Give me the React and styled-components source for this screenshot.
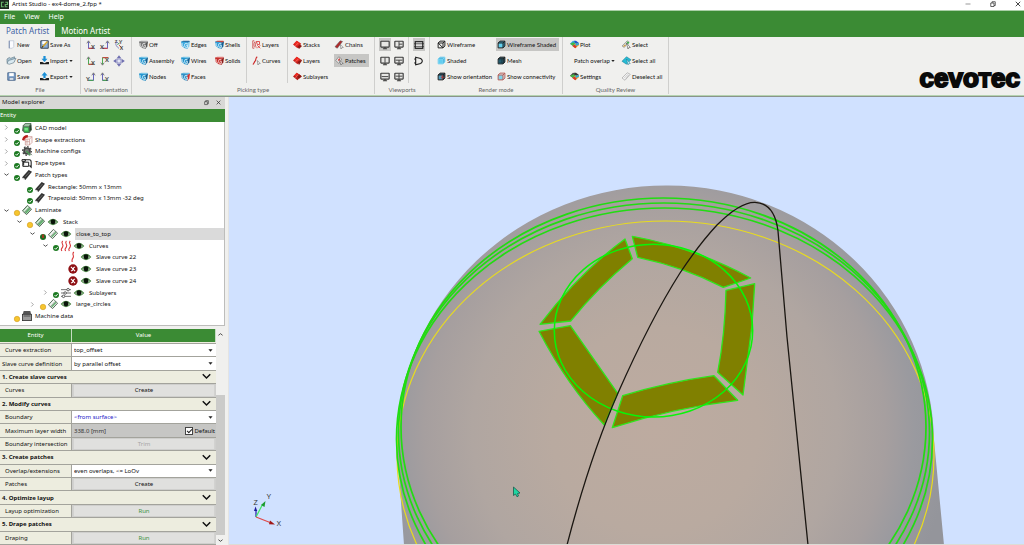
import React from "react";
import styled, { createGlobalStyle, css } from "styled-components";

const green = "#3b8b34";
const uiFont = '"Noto Sans", "Open Sans", sans-serif';

const GlobalStyle = createGlobalStyle`
  *, *::before, *::after { box-sizing: border-box; }
  html, body { margin: 0; height: 100%; overflow: hidden; }
  body { font-family: ${uiFont}; font-size: 6px; line-height: 10px; color: #111; background: #f0f0ee; }
  button, select, input { font: inherit; color: inherit; margin: 0; padding: 0; border: 0; background: none; border-radius: 0; }
`;

/* ---------- icons ---------- */

const Svg = styled.svg`
  display: block;
  flex: none;
  width: ${(p) => p.$w || 10}px;
  height: ${(p) => p.$w || 10}px;
  overflow: visible;
`;

const Cube = ({ a, b, c, mark = "#dff3fb" }) => (
  <>
    <path d="M0 2 3 1h8l1 1-3 2.500z" fill={b} />
    <path d="M0 2l9 1v8.500L5 11 1 8z" fill={a} />
    <path d="M8.500 4 12 2l-1 7-3 2.500z" fill={c} />
    <path d="M8.500 4.500q-4-1-4 2.500t4 3V7H6.500M1.500 4v3l2 2" fill="none" stroke={mark} strokeWidth="1.100" />
  </>
);

const WireCube = ({ fill = "none", stroke = "#222", side = fill }) => (
  <g stroke={stroke} strokeWidth="1.300" strokeLinejoin="round">
    <path d="M1.500 4 4 1.500h6.500V8L8 10.500z" fill={side} />
    <path d="M1.500 4H8v6.500H1.500z" fill={fill} />
    <path d="M8 4l2.500-2.500" fill="none" />
  </g>
);

const Axis = ({ side, flip, down, dx = "X", uc = "#5b59b8" }) => (
  <>
    <path
      d={down ? "M3 2v8M3 2h7" : flip ? "M9 2v8H2" : "M3 2v8h7"}
      fill="none"
      stroke={uc}
      strokeWidth="1.100"
    />
    <path d={down ? "M3 2h7" : flip ? "M9 10H3" : "M3 10h6"} stroke={side} strokeWidth="1.200" />
    <path d={down ? "M1 8l2 3 2-3" : flip ? "M7 4l2-3 2 3" : "M1 4l2-3 2 3"} fill="none" stroke="#555" strokeWidth=".9" />
    <text x={flip ? 0 : 6} y={down ? 7 : 11} fontSize="7" fontWeight="700" fill="#444">{dx}</text>
  </>
);

const Monitor = ({ lines }) => (
  <>
    <rect x="1" y="1.500" width="10" height="7" rx=".6" fill="#e6e6e4" stroke="#3c3c3c" strokeWidth="1.400" />
    <path d="M3.500 10.500h5M6 8.500v2" stroke="#3c3c3c" strokeWidth="1.300" />
    {lines && <path d={lines} stroke="#3c3c3c" strokeWidth="1.100" fill="none" />}
  </>
);

const Diamond = ({ fill = "#d8201c", second }) => (
  <>
    <path d="M0 6 5 1l6 4-5 6z" fill={fill} />
    <path d="M1.500 4.500 5 1l4 3-3.500 3.500z" fill="#ee2b22" />
    <path d={second || "M6 9l3-3 3 2-4 4z"} fill="#8d1713" />
    <path d="M3 8l4-4" stroke="#f7a8a4" strokeWidth=".6" />
  </>
);

const Plate = ({ fill = "#a9d8b0", stroke = "#5b6b5e" }) => (
  <>
    <path d="M.5 7 6.500.500 11.500 5 5.500 11.500z" fill={fill} stroke={stroke} strokeWidth="1.200" strokeLinejoin="round" />
    <path d="M2.500 7.500 7.500 2" stroke="#f4f8f4" strokeWidth="1.100" />
    <path d="M4.500 9.500 9.500 4" stroke="#55a862" strokeWidth="1.600" />
    <path d="M3.500 8.500 8.500 3" stroke={stroke} strokeWidth=".7" />
  </>
);

const Rainbow = ({ dark }) => (
  <>
    <path d="M0 5 4 1l4 2-4 5z" fill={dark ? "#444" : "#2aa7e0"} />
    <path d="M5 1h3l4 3-4 2z" fill={dark ? "#333" : "#1b57c8"} />
    <path d="M0 5l4 3 3-3-2-2z" fill="#45b944" />
    <path d="M4 8l3-3 5-1v3L7 11z" fill="#e7a52c" />
    <path d="M3 8l4 3 2-2-3-3z" fill="#d8382a" />
    <path d="M7 5l5-1v2L8 8z" fill="#2aa7e0" />
  </>
);

const art = {
  app: (
    <>
      <rect width="12" height="12" fill="#1d2a20" />
      <path d="M5 3H2v6h3M7 3h3v3H7v3h3" fill="none" stroke="#69b56c" strokeWidth="1.500" />
    </>
  ),
  new: (
    <>
      <path d="M3 1h6v8l-2 2H3z" fill="#fbfcff" stroke="#b4bfd2" strokeWidth=".9" />
      <path d="M3 1v10" stroke="#6f83a8" strokeWidth="1.200" />
    </>
  ),
  open: (
    <>
      <path d="M0 9V4l3-2 2 1 5-2v6z" fill="#a9c3d2" stroke="#5d7482" strokeWidth=".8" />
      <path d="M0 10l2-4 10-3-3 6-6 2z" fill="#d9e9f1" stroke="#5d7482" strokeWidth=".8" />
    </>
  ),
  save: (
    <>
      <path d="M1 1h10v10H1z" fill="#7fa3cf" stroke="#39557d" />
      <path d="M3 1.500h6v4H3z" fill="#fff" />
      <path d="M3 7.500h6V11H3z" fill="#dfe6ee" stroke="#39557d" strokeWidth=".6" />
    </>
  ),
  saveAs: (
    <>
      <path d="M1 1h10v10H1z" fill="#8aaedb" stroke="#303a48" strokeWidth="1.200" />
      <path d="M3 1.500h6v4H3z" fill="#fff" />
      <path d="M3 9.500 10 2" stroke="#d6a72c" strokeWidth="2" />
      <path d="M2.500 10.500 4 8" stroke="#222" strokeWidth="1.200" />
    </>
  ),
  import: (
    <>
      <path d="M0 8h3L6 9.500 9 8h3v3H0z" fill="#1d1d1d" />
      <path d="M4.500 0h3v3.500h2.500L6 8 2 3.500h2.500z" fill="#1b8fd6" />
    </>
  ),
  export: (
    <>
      <path d="M0 8h3L6 9.500 9 8h3v3H0z" fill="#1d1d1d" />
      <path d="M4.500 8h3V4.500h2.500L6 0 2 4.500h2.500z" fill="#1b8fd6" />
    </>
  ),
  ax1: <Axis side="#cf3a3a" />,
  ax2: <Axis flip side="#cf3a3a" />,
  ax3: (
    <>
      <path d="M3 2C1 5 3 8 6 10M3 2l3 3" fill="none" stroke="#6d6bb5" />
      <path d="M6 6l4 4" stroke="#cf3a3a" />
      <path d="M4 6l3-3" stroke="#3fa345" />
      <text x="6" y="5" fontSize="6" fontWeight="700" fill="#444">Y</text>
      <text x="7" y="12" fontSize="6" fontWeight="700" fill="#444">X</text>
      <text x="1" y="4" fontSize="5" fontWeight="700" fill="#444">Z</text>
    </>
  ),
  ax4: <Axis side="#cf3a3a" uc="#3fa345" />,
  ax5: <Axis down side="#cf3a3a" uc="#3fa345" />,
  fit: (
    <>
      <path d="M6-1l2.500 3.500h-5zM6 13l2.500-3.500h-5zM-1 6l3.500-2.500v5zM13 6 9.500 3.500v5z" fill="#6f6fb0" />
      <rect x="3.500" y="3.500" width="5" height="5" fill="#e4e6f6" stroke="#6f6fb0" />
    </>
  ),
  ax6: <Axis flip side="#3fa345" dx="Y" />,
  ax7: <Axis side="#3fa345" dx="Y" />,
  off: <Cube a="#777" b="#aaa" c="#555" mark="#ececec" />,
  blue: <Cube a="#2596cf" b="#7cc7e8" c="#155f92" />,
  edges: <Cube a="#39a7dd" b="#2a6f9f" c="#8bd0ef" />,
  faces: <Cube a="#2f8fc4" b="#6abce2" c="#d22e2a" />,
  shells: <Cube a="#2f9dd6" b="#c9473f" c="#155f92" />,
  solids: <Cube a="#c4302d" b="#e07a76" c="#8a1c1a" mark="#fbd9d7" />,
  pLayers: (
    <>
      <path d="M3 1H1v10h2M4 2c-2 3-2 6 0 8M6 2c-2 3-2 6 0 8" fill="none" stroke="#c93a3a" />
      <path d="M6 2h4v4H7zM7 7l4 4M7 11l4-4" fill="none" stroke="#d33" strokeWidth="1.100" />
    </>
  ),
  pCurves: (
    <>
      <path d="M7 1c-3 2-1 4-3 6S3 11 1 11" fill="none" stroke="#c22" strokeWidth="1.500" />
      <path d="M7 6l4 4-2 .2-1 1.800z" fill="#fff" stroke="#444" strokeWidth=".6" />
    </>
  ),
  stacks: <Diamond />,
  layers: <Diamond fill="#c92420" second="M6 8l5-3 1 1-4 6z" />,
  sublayers: <Diamond fill="#b51d1a" second="M5 6l3-3 4 3-4 3z" />,
  chains: (
    <>
      <path d="M0 9l7-8 3 1-7 9z" fill="#b3282a" stroke="#555" strokeWidth=".7" />
      <path d="M7 6l4 4-2 .2-1 1.800z" fill="#fff" stroke="#444" strokeWidth=".6" />
    </>
  ),
  patches: (
    <>
      <path d="M1 6 5 1l4 3-4 6z" fill="#e4e4e2" stroke="#777" strokeWidth=".9" />
      <path d="M4 5l2-2 1 1-2 3z" fill="#c33" />
      <path d="M6 6l5 4-2 .2-1 1.800z" fill="#fff" stroke="#444" strokeWidth=".7" />
    </>
  ),
  m1: <Monitor />,
  m2: <Monitor lines="M6 2v6M6 5h4" />,
  m3: <Monitor lines="M6 2v6" />,
  m4: <Monitor lines="M2 5h8M6 5v3" />,
  m5: <Monitor lines="M2 5.500h8" />,
  m6: <Monitor lines="M2 5h8M6 2v6" />,
  ortho: (
    <>
      <rect x="1.500" y="2" width="9" height="8" fill="#dedede" stroke="#222" strokeWidth="1.400" />
      <path d="M0 4.500h12M0 8h12" stroke="#222" strokeWidth=".8" />
    </>
  ),
  persp: <path d="M2 1.500 8 3q4 3 0 6L2 10.500zM.5 3.500 2 4M.5 8.500 2 8" fill="none" stroke="#222" strokeWidth="1.400" />,
  wire: <WireCube />,
  shaded: <WireCube fill="#62cdf0" side="#2aa2d4" stroke="#7ed3f0" />,
  orient: (
    <>
      <WireCube fill="#4f9fc0" side="#24566e" />
      <path d="M5 7h5M7 4v6" stroke="#a83b3b" strokeWidth="1.200" />
    </>
  ),
  wireShaded: <WireCube fill="#63d0ee" side="#2d8fb0" />,
  mesh: (
    <>
      <WireCube fill="#3d8ca6" side="#1c4c5e" />
      <path d="M4 4v6M6 4v6M2 6.500h6M2 8.500h6" stroke="#12303a" strokeWidth=".8" />
    </>
  ),
  connect: <WireCube fill="#7fd4ea" side="#d8eef4" stroke="#b85a52" />,
  plot: <Rainbow />,
  settings: <Rainbow dark />,
  select: (
    <>
      <path d="M0 8 7 1l2 1-6 8z" fill="#cfd6c8" stroke="#777" strokeWidth=".7" />
      <path d="M6 2l4 1-2 3z" fill="#3ab54a" />
      <path d="M1 9l3-3 1 2z" fill="#d93" />
      <path d="M6 4l5 6-2 .2-1 1.800z" fill="#fff" stroke="#333" strokeWidth=".7" />
    </>
  ),
  selectAll: (
    <>
      <path d="M0 7 6 1l6 4-6 6z" fill="#25bcd4" stroke="#1b7f9a" strokeWidth=".8" />
      <path d="M6 4l5 6-2 .2-1 1.800z" fill="#b9f3fb" stroke="#1b5f7a" strokeWidth=".6" />
    </>
  ),
  deselect: (
    <>
      <path d="M0 8 7 1l4 2-7 8z" fill="#f3f3f3" stroke="#999" strokeWidth=".8" />
      <path d="M3 8l5-5M5 9l4-5" stroke="#aaa" strokeWidth=".7" />
    </>
  ),
  cad: (
    <>
      <path d="M1 3 4 0h7l1 8-3 4H3L0 9z" fill="#55705a" />
      <path d="M2 5h6v6H3z" fill="#35b84b" />
      <path d="M4 1h6L8 4H2z" fill="#9fbfa4" />
      <path d="M9 4l2-2v6l-2 2z" fill="#2c4431" />
      <path d="M3 6h4v3H3z" fill="#7be08b" />
    </>
  ),
  shape: (
    <>
      <path d="M4 2h8v7l-3 3H4z" fill="#fbf5f4" stroke="#c58b88" strokeWidth=".8" />
      <path d="M4 5h5v7M9 5l3-3M6 5v6M4 8h5" fill="none" stroke="#c58b88" strokeWidth=".7" />
      <path d="M0 6Q1 0 7 0v3Q3 3 3 7z" fill="#b81c1c" />
    </>
  ),
  gear: (
    <>
      <circle cx="6" cy="6" r="3.600" fill="#777" stroke="#444" strokeWidth="2" />
      <circle cx="6" cy="6" r="5.200" fill="none" stroke="#444" strokeWidth="1.500" strokeDasharray="2 2" />
      <path d="M5 6l5 5" stroke="#4d9b57" strokeWidth="1.800" />
      <path d="M7 5l5 6" stroke="#666" strokeWidth=".9" />
    </>
  ),
  tape: (
    <>
      <path d="M0 2h4v2H0zM2 4v5M1 5h7v5H1z" fill="none" stroke="#222" strokeWidth="1.200" />
      <path d="M3 2h6q2 0 2 3v6l-2-2" fill="none" stroke="#222" strokeWidth="1.300" />
    </>
  ),
  patch: (
    <>
      <path d="M0 9 8 0l4 2-8 10z" fill="#333" />
      <path d="M.5 9.500 3.500 11.500" stroke="#ddd" strokeWidth="1.500" />
      <path d="M4 8l5-5.500" stroke="#888" strokeWidth=".8" />
    </>
  ),
  plate: <Plate />,
  plateLight: <Plate fill="#eef2ee" />,
  curves: (
    <path d="M2 0c-3 3 2 4 0 7s-2 3-1 5M6.500 0c-3 3 2 4 0 7s-2 3-1 5M11 0c-3 3 2 4 0 7s-2 3-1 5" fill="none" stroke="#d9383a" strokeWidth="1.300" />
  ),
  curve: <path d="M7 0c-3 3 1 4-1 7s-1 3-1 5" fill="none" stroke="#d9383a" strokeWidth="1.300" />,
  error: (
    <>
      <circle cx="6" cy="6" r="5.600" fill="#8f1014" />
      <path d="M3.500 8.500Q6 8 6 6t2.500-2.500M3.500 3.500l5 5" fill="none" stroke="#fff" strokeWidth="1.300" />
    </>
  ),
  sliders: (
    <>
      <path d="M0 2h12M0 6h12M0 10h12" stroke="#555" strokeWidth="1" />
      <circle cx="8.500" cy="2" r="1.500" fill="#fff" stroke="#444" />
      <circle cx="5" cy="6" r="1.500" fill="#fff" stroke="#444" />
      <circle cx="3" cy="10" r="1.500" fill="#fff" stroke="#444" />
    </>
  ),
  machine: (
    <>
      <path d="M2 0h8l1 4H1z" fill="#555" />
      <rect x=".5" y="4" width="11" height="7.500" fill="#9b9b9b" stroke="#333" />
      <path d="M2 6h8" stroke="#444" />
    </>
  ),
  eye: (
    <>
      <path d="M.5 6Q6-.5 11.500 6 6 12.500.5 6z" fill="#cdeac9" stroke="#3b7a35" strokeWidth="1.300" />
      <circle cx="6" cy="5.800" r="3" fill="#081408" />
    </>
  ),
  ok: (
    <>
      <circle cx="6" cy="6" r="6" fill="#1d7a22" />
      <path d="M3 6l2.500 2.500L9.500 4" fill="none" stroke="#fff" strokeWidth="1.800" />
    </>
  ),
  warn: <circle cx="6" cy="6" r="5.500" fill="#f6c52e" stroke="#c98f12" />,
  mixed: (
    <>
      <circle cx="6" cy="6" r="6" fill="#1d6a22" />
      <path d="M4 1h4v7H4z" fill="#9a3a1e" />
    </>
  ),
  chevR: <path d="M3 1l5 5-5 5" fill="none" stroke="#8a8a8a" strokeWidth="1.800" />,
  chevD: <path d="M1 4l5 4 5-4" fill="none" stroke="#333" strokeWidth="2" />,
  chevU: <path d="M1 8l5-4 5 4" fill="none" stroke="#333" strokeWidth="2" />,
  fold: <path d="M1 3l5 5 5-5" fill="none" stroke="#111" strokeWidth="2" />,
  caret: <path d="M1 3h10L6 9z" fill="#222" />,
  min: <path d="M1 6h10" stroke="#333" />,
  restore: <path d="M1.500 4h6.500v7H1.500zM4 4V1.500h6.500V9H8" fill="none" stroke="#333" strokeWidth="1.500" />,
  close: <path d="M1.500 1.500l9 9M10.500 1.500l-9 9" stroke="#333" strokeWidth="1.800" />,
};

const Icon = ({ name, w }) => (
  <Svg viewBox="0 0 12 12" $w={w} aria-hidden="true">
    {art[name]}
  </Svg>
);

/* ---------- frame ---------- */

const Window = styled.div`
  display: flex;
  flex-direction: column;
  height: 100vh;
`;

const TitleBar = styled.header`
  display: flex;
  align-items: center;
  height: 11px;
  padding: 0 3px 2px 0;
  gap: 3px;
  background: #fff;
  border-bottom: 1px solid #a9cfa6;
`;

const TitleText = styled.h1`
  flex: 1;
  margin: 0;
  font-size: 6px;
  line-height: 8px;
  font-weight: 400;
`;

const WindowButtons = styled.div`
  display: flex;
  gap: 18px;
`;

const IconButton = styled.button`
  display: grid;
  place-items: center;
  width: ${(p) => p.$size || 7}px;
`;

const MenuBar = styled.nav`
  display: flex;
  gap: 9px;
  height: 13px;
  padding: 0 0 2px 4px;
  align-items: center;
  font-size: 7px;
  color: #fff;
  background: ${green};
`;

const TabBar = styled.div`
  display: flex;
  height: 13px;
  background: ${green};
`;

const Tab = styled.button`
  padding: 0 6px;
  font-size: 8px;
  line-height: 12px;
  color: ${(p) => (p.$active ? "#3d62a5" : "#fff")};
  background: ${(p) => (p.$active ? "#f0f0ee" : "none")};
`;

const Ribbon = styled.div`
  display: flex;
  justify-content: space-between;
  height: 60px;
  border-bottom: 1px solid #8a938a;
  box-shadow: inset 0 -1px 0 #b5d3b0;
  background: #f0f0ee;
  font-family: Lato, sans-serif;
`;

const Groups = styled.div`
  display: flex;
`;

const Group = styled.section`
  display: flex;
  flex-direction: column;
  width: ${(p) => p.$w}px;
  margin: 0 0 2px;
  border-right: 1px solid #cfcfcd;
`;

const GroupBody = styled.div`
  display: flex;
  height: 49px;
  padding-left: ${(p) => p.$pad || 0}px;
`;

const Caption = styled.div`
  line-height: 8px;
  text-align: center;
  color: #666;
`;

const Column = styled.div`
  display: grid;
  grid-template-rows: repeat(3, 16px);
  align-items: start;
  padding-top: 1px;
  height: 46px;
  width: ${(p) => p.$w}px;
  ${(p) => p.$rule && css`
    border-left: 1px solid #cfcfcd;
    padding-left: 4px;
  `}
`;

const Tool = styled.button`
  display: flex;
  align-items: center;
  gap: 1px;
  justify-self: start;
  height: 13px;
  padding: 0 ${(p) => (p.$on ? 3 : 0)}px 0 1px;
  line-height: 9px;
  white-space: nowrap;
  background: ${(p) => (p.$on ? "#c6c6c4" : "none")};
`;

const PressedTool = styled.button`
  display: grid;
  place-items: center;
  height: 13px;
  justify-self: start;
  background: #c6c6c4;
  padding: 0 1px;
`;

const Logo = styled.div`
  align-self: flex-end;
  padding: 0 4px 3px 0;
  font-family: "Liberation Sans", Arial, sans-serif;
  font-weight: 700;
  font-size: 26px;
  line-height: 26px;
  color: #0a0a0a;
  -webkit-text-stroke: 2px #0a0a0a;
`;

const SmallCap = styled.span`
  font-size: 20px;
`;

/* ---------- ribbon content ---------- */

const groups = [
  {
    caption: "File", w: 81, pad: 6,
    cols: [
      { w: 33, items: [["new", "New"], ["open", "Open"], ["save", "Save"]] },
      { w: 40, items: [["saveAs", "Save As"], ["import", "Import", { caret: 1 }], ["export", "Export", { caret: 1 }]] },
    ],
  },
  {
    caption: "View orientation", w: 51, pad: 4,
    cols: [
      { w: 14, items: [["ax1"], ["ax4"], ["ax6"]] },
      { w: 14, items: [["ax2"], ["ax5"], ["ax7"]] },
      { w: 14, items: [["ax3"], ["fit"]] },
    ],
  },
  {
    caption: "Picking type", w: 243, pad: 6,
    cols: [
      { w: 42, items: [["off", "Off"], ["blue", "Assembly"], ["blue", "Nodes"]] },
      { w: 34, items: [["edges", "Edges"], ["blue", "Wires"], ["faces", "Faces"]] },
      { w: 32, items: [["shells", "Shells"], ["solids", "Solids"]] },
      { w: 41, rule: 1, items: [["pLayers", "Layers"], ["pCurves", "Curves"]] },
      { w: 47, rule: 1, items: [["stacks", "Stacks"], ["layers", "Layers"], ["sublayers", "Sublayers"]] },
      { w: 36, items: [["chains", "Chains"], ["patches", "Patches", { on: 1 }]] },
    ],
  },
  {
    caption: "Viewports", w: 55, pad: 4,
    cols: [
      { w: 14, items: [["m1", null, { on: 1 }], ["m3"], ["m5"]] },
      { w: 15, items: [["m2"], ["m4"], ["m6"]] },
      { w: 16, rule: 1, items: [["ortho", null, { on: 1 }], ["persp"]] },
    ],
  },
  {
    caption: "Render mode", w: 133, pad: 6,
    cols: [
      { w: 60, items: [["wire", "Wireframe"], ["shaded", "Shaded"], ["orient", "Show orientation"]] },
      { w: 62, items: [["wireShaded", "Wireframe Shaded", { on: 1 }], ["mesh", "Mesh"], ["connect", "Show connectivity"]] },
    ],
  },
  {
    caption: "Quality Review", w: 106, pad: 6,
    cols: [
      { w: 52, items: [["plot", "Plot"], [null, "Patch overlap", { caret: 1 }], ["settings", "Settings"]] },
      { w: 44, items: [["select", "Select"], ["selectAll", "Select all"], ["deselect", "Deselect all"]] },
    ],
  },
];

const ToolLabel = styled.span`
  padding-left: ${(p) => (p.$indent ? 4 : 0)}px;
`;

const RibbonTool = ({ item: [icon, label, opt = {}] }) => {
  if (!label && opt.on) {
    return <PressedTool type="button" aria-label={icon}><Icon name={icon} /></PressedTool>;
  }
  return (
    <Tool type="button" $on={opt.on} aria-label={label || icon}>
      {icon && <Icon name={icon} w={label ? 9 : 10} />}
      {label && <ToolLabel $indent={!icon}>{label}</ToolLabel>}
      {opt.caret && <Icon name="caret" w={4} />}
    </Tool>
  );
};

/* ---------- model explorer ---------- */

const Body = styled.div`
  display: flex;
  flex: 1;
  min-height: 0;
`;

const Sidebar = styled.aside`
  display: flex;
  flex-direction: column;
  width: 229px;
  flex: none;
  padding-right: 3px;
  border-right: 1px solid #e4e4e2;
`;

const DockTitle = styled.div`
  display: flex;
  align-items: center;
  gap: 5px;
  height: 12px;
  padding: 0 3px 2px 2px;
  background: #d8d8d6;
`;

const DockName = styled.span`
  flex: 1;
`;

const TreeHeader = styled.div`
  height: 13px;
  line-height: 12px;
  color: #fff;
  background: ${green};
`;

const Tree = styled.ul`
  display: grid;
  grid-auto-rows: 1fr;
  height: 204px;
  margin: 0 0 3px;
  padding: 0 0 3px;
  list-style: none;
  background: #fff;
  border: solid #bdbdbb;
  border-width: 0 1px 1px 0;
`;

const TreeRow = styled.li`
  display: flex;
  align-items: center;
  padding-left: ${(p) => p.$depth * 13}px;
`;

const Slot = styled.span`
  display: flex;
  justify-content: center;
  align-self: ${(p) => (p.$low ? "flex-end" : "center")};
  width: ${(p) => p.$w}px;
  flex: none;
`;

const TreeLabel = styled.span`
  flex: 1;
  align-self: stretch;
  display: flex;
  align-items: center;
  margin-left: 2px;
  padding-left: 1px;
  background: ${(p) => (p.$selected ? "#dadada" : "none")};
`;

/* depth, chevron, status, icon, label, options */
const tree = [
  [0, "chevR", "ok", "cad", "CAD model"],
  [0, "chevR", "ok", "shape", "Shape extractions"],
  [0, "chevR", "ok", "gear", "Machine configs"],
  [0, "chevR", "ok", "tape", "Tape types"],
  [0, "chevD", "ok", "patch", "Patch types"],
  [1, null, "ok", "patch", "Rectangle: 50mm x 13mm"],
  [1, null, "ok", "patch", "Trapezoid: 50mm x 13mm -32 deg"],
  [0, "chevD", "warn", "plate", "Laminate"],
  [1, "chevD", "warn", "plate", "Stack", { eye: 1 }],
  [2, "chevD", "mixed", "plateLight", "close_to_top", { eye: 1, selected: 1 }],
  [3, "chevD", "ok", "curves", "Curves", { eye: 1 }],
  [4, null, null, "curve", "Slave curve 22", { eye: 1 }],
  [4, null, null, "error", "Slave curve 23", { eye: 1 }],
  [4, null, null, "error", "Slave curve 24", { eye: 1 }],
  [3, "chevR", "ok", "sliders", "Sublayers", { eye: 1 }],
  [2, "chevR", "warn", "plateLight", "large_circles", { eye: 1 }],
  [0, null, "warn", "machine", "Machine data"],
];

/* ---------- property editor ---------- */

const Properties = styled.div`
  display: grid;
  grid-template-columns: 1fr 9px;
  flex: 1;
  min-height: 0;
`;

const PropTable = styled.table`
  display: flex;
  flex-direction: column;
  min-height: 0;
  background: #ededdf;

  thead { display: block; }
  tbody { display: grid; grid-auto-rows: 1fr; flex: 1; min-height: 0; }
`;

const PropRow = styled.tr`
  display: grid;
  grid-template-columns: ${(p) => (p.$section ? "1fr" : "72px 1fr")};
  min-height: 0;
  border-bottom: 1px solid #a3a39c;
`;

const HeadRow = styled(PropRow)`
  height: 15px;
  padding-bottom: 1px;
`;

const HeadCell = styled.th`
  padding: 0;
  border-right: 1px solid #c5dcc2;
  font-weight: 400;
  line-height: 12px;
  color: #fff;
  background: ${green};
`;

const LabelCell = styled.th`
  display: flex;
  align-items: center;
  padding: 0 0 0 ${(p) => (p.$tight ? 2 : 5)}px;
  font-weight: 400;
  white-space: nowrap;
  border-right: 1px solid #a3a39c;
`;

const ValueCell = styled.td`
  display: flex;
  align-items: stretch;
  padding: 0;
  background: ${(p) => p.$bg || "#fff"};
`;

const SectionCell = styled.th`
  display: flex;
  align-items: center;
  justify-content: space-between;
  padding: 0 5px 0 2px;
  font-weight: 700;
`;

const Select = styled.select`
  flex: 1;
  min-width: 0;
  padding-left: 2px;
  appearance: none;
  color: ${(p) => (p.$blue ? "#2420c8" : "inherit")};
`;

const SelectCaret = styled.span`
  align-self: center;
  margin-right: 3px;
  pointer-events: none;
`;

const CellButton = styled.button`
  flex: 1;
  margin: 1px;
  line-height: 8px;
  background: #e0e0de;
  border: 1px solid #d2d2d0;
  border-width: 0 1px;
  color: ${(p) => (p.$tone === "run" ? "#3f9440" : p.$tone === "off" ? "#a6a6a6" : "#111")};
`;

const NumberBox = styled.input`
  flex: 1;
  min-width: 0;
  padding-left: 2px;
  color: #333;
`;

const Check = styled.label`
  display: flex;
  align-items: center;
  gap: 1px;
  padding-right: 1px;

  input {
    appearance: none;
    display: grid;
    place-items: center;
    width: 8px;
    height: 8px;
    border: 1px solid #444;
    background: #fff;
  }
  input:checked::after {
    content: "";
    width: 5px;
    height: 3px;
    border: solid #222;
    border-width: 0 0 1px 1px;
    transform: rotate(-45deg);
  }
`;

const ScrollBar = styled.div`
  display: flex;
  flex-direction: column;
  align-items: stretch;
  background: #cbcbc9;
`;

const ScrollButton = styled.button`
  display: grid;
  place-items: center;
  height: 10px;
  background: #f0f0ee;
`;

const Thumb = styled.div`
  height: 56px;
  background: #f0f0ee;
`;

const Spacer = styled.div`
  flex: 1;
`;

const properties = [
  { label: "Curve extraction", select: "top_offset" },
  { label: "Slave curve definition", select: "by parallel offset", tight: 1 },
  { section: "1. Create slave curves" },
  { label: "Curves", button: "Create" },
  { section: "2. Modify curves" },
  { label: "Boundary", select: "<from surface>", blue: 1 },
  { label: "Maximum layer width", number: "338.0 [mm]" },
  { label: "Boundary intersection", button: "Trim", tone: "off" },
  { section: "3. Create patches" },
  { label: "Overlap/extensions", select: "even overlaps, <= LoOv" },
  { label: "Patches", button: "Create" },
  { section: "4. Optimize layup" },
  { label: "Layup optimization", button: "Run", tone: "run" },
  { section: "5. Drape patches" },
  { label: "Draping", button: "Run", tone: "run" },
];

const Property = ({ p }) => {
  if (p.section) {
    return (
      <PropRow $section>
        <SectionCell scope="rowgroup">
          {p.section}
          <IconButton type="button" $size={9} aria-label={`Fold ${p.section}`}><Icon name="fold" w={9} /></IconButton>
        </SectionCell>
      </PropRow>
    );
  }
  return (
    <PropRow>
      <LabelCell scope="row" $tight={p.tight}>{p.label}</LabelCell>
      {p.select && (
        <ValueCell>
          <Select aria-label={p.label} $blue={p.blue}><option>{p.select}</option></Select>
          <SelectCaret><Icon name="caret" w={5} /></SelectCaret>
        </ValueCell>
      )}
      {p.button && (
        <ValueCell $bg="#cfcfcd">
          <CellButton type="button" $tone={p.tone}>{p.button}</CellButton>
        </ValueCell>
      )}
      {p.number && (
        <ValueCell $bg="#c6c6c4">
          <NumberBox aria-label={p.label} defaultValue={p.number} />
          <Check><input type="checkbox" defaultChecked />Default</Check>
        </ValueCell>
      )}
    </PropRow>
  );
};

/* ---------- 3D view ---------- */

const Viewport = styled.main`
  flex: 1;
  min-width: 0;
  background: #d0e1ff;
  border-bottom: 1px solid #dcdcd6;
`;

const Scene = styled.svg`
  display: block;
  width: 100%;
  height: 100%;
`;

const DomeScene = () => (
  <Scene viewBox="229 97 795 447" preserveAspectRatio="xMidYMid slice" role="img" aria-label="Dome with patches">
    <defs>
      <radialGradient id="shade" gradientUnits="userSpaceOnUse" cx="655" cy="430" r="295">
        <stop offset="0" stopColor="#bdaba0" />
        <stop offset=".35" stopColor="#b9aaa0" />
        <stop offset=".62" stopColor="#b0a6a1" />
        <stop offset=".78" stopColor="#a69f9f" />
        <stop offset=".88" stopColor="#9a9a9f" />
        <stop offset="1" stopColor="#94959b" />
      </radialGradient>
    </defs>
    <path d="M404 545 397 445A269 259.500 0 0 1 668 185.500 267 259.500 0 0 1 934 440L944 545z" fill="url(#shade)" />
    <ellipse cx="665.500" cy="456" rx="268.500" ry="235" fill="none" stroke="#e8dc1e" strokeWidth="1.200" />
    <g fill="none" stroke="#22dc12" strokeWidth="1.700">
      <ellipse cx="664.500" cy="439.500" rx="268" ry="231.500" />
      <ellipse cx="664" cy="432.500" rx="265.500" ry="229.500" />
      <ellipse cx="663.500" cy="427" rx="262.500" ry="229" />
    </g>
    <g fill="#808000" stroke="#2ee61c" strokeWidth="1.300" strokeLinejoin="round">
      <path d="M625 239 632.300 258.700Q598 287 570.700 321L540 324.300Q580 272 625 239z" />
      <path d="M632.300 236.300 637.700 257.300Q684 267 723.300 287.300L750.700 278Q693 247 632.300 236.300z" />
      <path d="M726 290.300 754.700 283.700 752 325 743 395 717.700 372.300Q725 335 726 290.300z" />
      <path d="M714 375.700 737.700 400.300Q672 408 612.300 427.700L622.700 395.700Q668 382 714 375.700z" />
      <path d="M539 331.300 570.300 325.700 617.700 393.300 604.300 425Q567 385 539 331.300z" />
    </g>
    <ellipse cx="653.500" cy="330.700" rx="99.200" ry="86.400" fill="none" stroke="#08f508" strokeWidth="1.500" />
    <path
      d="M567 545C580 495 596 443 618 393 637 350 659 306 680 273 692 255 703 240 717 225 731 211 744 202 755 202.300 769 203 776 214 778 231L787 337 808 545"
      fill="none" stroke="#1a1611" strokeWidth="1.300"
    />
    <g fontFamily="Liberation Sans, sans-serif" fontSize="7" fill="#333">
      <path d="M256 517V510" stroke="#2020a8" strokeWidth="1.200" />
      <path d="M254 511l1.500-4.500 1.700 4.500z" fill="#1a1a99" />
      <path d="M256 517l6.500-12.500" stroke="#3ee860" strokeWidth="1.200" />
      <path d="M261 505l4.500-4-1 6z" fill="#1c9b2c" />
      <path d="M256 517l14 5.500" stroke="#e04848" strokeWidth="1.200" />
      <path d="M270 520.500l5 4-6-.3z" fill="#a01818" />
      <text x="253.500" y="505">Z</text>
      <text x="266.500" y="499">Y</text>
      <text x="276.500" y="526">X</text>
    </g>
    <path d="M513.500 487v8.500l2-1.500 1.500 2.800 1.500-.8-1-2.500 2.500-.5z" fill="#1fd6a2" stroke="#1b5a4b" strokeWidth=".8" />
  </Scene>
);

export default function App() {
  return (
    <Window>
      <GlobalStyle />
      <TitleBar>
        <Icon name="app" w={9} />
        <TitleText>Artist Studio - ex4-dome_2.fpp *</TitleText>
        <WindowButtons>
          <IconButton type="button" aria-label="Minimize"><Icon name="min" w={6} /></IconButton>
          <IconButton type="button" aria-label="Restore"><Icon name="restore" w={6} /></IconButton>
          <IconButton type="button" aria-label="Close"><Icon name="close" w={6} /></IconButton>
        </WindowButtons>
      </TitleBar>
      <MenuBar>
        <button type="button">File</button>
        <button type="button">View</button>
        <button type="button">Help</button>
      </MenuBar>
      <TabBar>
        <Tab type="button" $active>Patch Artist</Tab>
        <Tab type="button">Motion Artist</Tab>
      </TabBar>
      <Ribbon>
        <Groups>
          {groups.map((g) => (
            <Group key={g.caption} $w={g.w}>
              <GroupBody $pad={g.pad}>
                {g.cols.map((c, i) => (
                  <Column key={i} $w={c.w} $rule={c.rule}>
                    {c.items.map((item, j) => <RibbonTool key={j} item={item} />)}
                  </Column>
                ))}
              </GroupBody>
              <Caption>{g.caption}</Caption>
            </Group>
          ))}
        </Groups>
        <Logo>cevo<SmallCap>T</SmallCap>ec</Logo>
      </Ribbon>
      <Body>
        <Sidebar>
          <DockTitle>
            <DockName>Model explorer</DockName>
            <IconButton type="button" aria-label="Float"><Icon name="restore" w={5} /></IconButton>
            <IconButton type="button" aria-label="Close panel"><Icon name="close" w={5} /></IconButton>
          </DockTitle>
          <TreeHeader>Entity</TreeHeader>
          <Tree>
            {tree.map(([depth, chev, status, icon, label, opt = {}]) => (
              <TreeRow key={label} $depth={depth}>
                <Slot $w={12}>{chev && <Icon name={chev} w={5} />}</Slot>
                <Slot $w={status ? 9 : 3} $low>{status && <Icon name={status} w={6} />}</Slot>
                <Slot $w={11}><Icon name={icon} /></Slot>
                {opt.eye && <Slot $w={15}><Icon name="eye" /></Slot>}
                <TreeLabel $selected={opt.selected}>{label}</TreeLabel>
              </TreeRow>
            ))}
          </Tree>
          <Properties>
            <PropTable>
              <thead>
                <HeadRow>
                  <HeadCell scope="col">Entity</HeadCell>
                  <HeadCell scope="col">Value</HeadCell>
                </HeadRow>
              </thead>
              <tbody>
                {properties.map((p, i) => <Property key={i} p={p} />)}
              </tbody>
            </PropTable>
            <ScrollBar>
              <ScrollButton type="button" aria-label="Scroll up"><Icon name="chevU" w={5} /></ScrollButton>
              <Thumb />
              <Spacer />
              <ScrollButton type="button" aria-label="Scroll down"><Icon name="chevD" w={5} /></ScrollButton>
            </ScrollBar>
          </Properties>
        </Sidebar>
        <Viewport><DomeScene /></Viewport>
      </Body>
    </Window>
  );
}
